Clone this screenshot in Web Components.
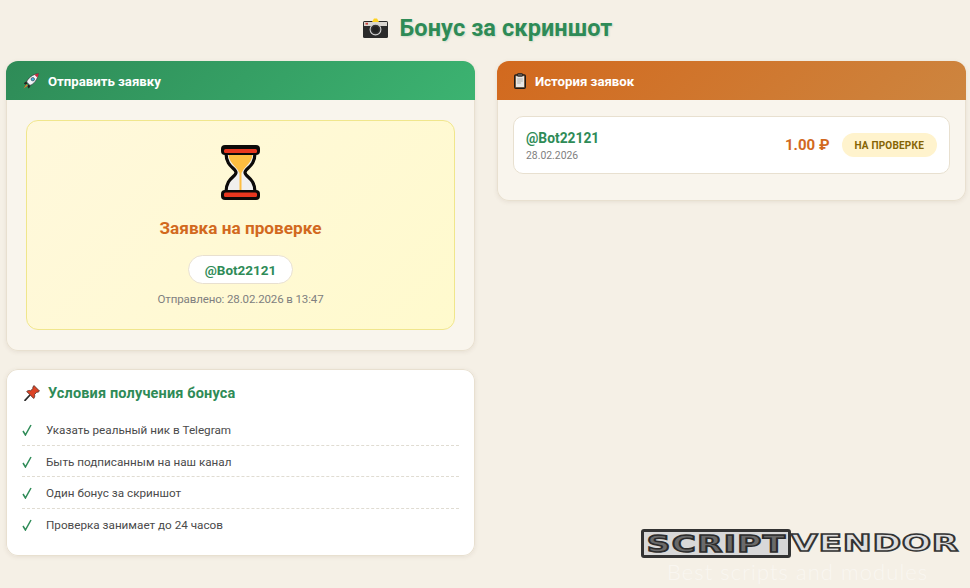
<!DOCTYPE html>
<html lang="ru">
<head>
<meta charset="utf-8">
<title>Бонус за скриншот</title>
<style>
  html, body { margin: 0; height: 100%; }
  body {
    background: #f5f0e6;
    font-family: Roboto, "Open Sans", sans-serif;
    overflow: hidden;
  }
</style>
</head>
<body>
<bonus-page>
  <bonus-title>Бонус за скриншот</bonus-title>
  <bonus-card slot="left" tone="green" heading="Отправить заявку" icon="rocket">
    <pending-box nick="@Bot22121" sent="Отправлено: 28.02.2026 в 13:47">Заявка на проверке</pending-box>
  </bonus-card>
  <terms-card slot="left" heading="Условия получения бонуса">
    <terms-item>Указать реальный ник в Telegram</terms-item>
    <terms-item>Быть подписанным на наш канал</terms-item>
    <terms-item>Один бонус за скриншот</terms-item>
    <terms-item>Проверка занимает до 24 часов</terms-item>
  </terms-card>
  <bonus-card slot="right" tone="orange" heading="История заявок" icon="clipboard">
    <history-item nick="@Bot22121" date="28.02.2026" amount="1.00 ₽" status="На проверке"></history-item>
  </bonus-card>
</bonus-page>
<vendor-mark></vendor-mark>

<script>
(function () {
  const icons = {
    camera: `<svg viewBox="0 0 25 20" width="25" height="20">
      <rect x="0" y="3" width="25" height="17" rx="1.500" fill="#2b2b2b"/>
      <rect x="1" y="4" width="23" height="4" fill="#d9d6d0"/>
      <path d="M9 4l2-3.500h3L16 4z" fill="#ffd21f"/>
      <rect x="2.500" y="4.800" width="2.500" height="1.800" fill="#c9433a"/>
      <circle cx="12.500" cy="11.500" r="5.400" fill="#343434" stroke="#d2d2d2" stroke-width="1.100"/>
      <circle cx="12.500" cy="11.500" r="3.200" fill="#222"/>
    </svg>`,
    rocket: `<svg viewBox="0 0 16 16" width="16" height="16">
      <path d="M3.400 8.200L.8 10.200l1.400 1.200 2.400-.6z" fill="#222"/>
      <path d="M7.800 12.600l-2 2.800-1.200-1.400.6-2.400z" fill="#222"/>
      <path d="M3.300 11.200L.6 15.400l4.200-2.700z" fill="#e8762c"/>
      <path d="M3.600 9C5 5 9.400 1.400 15.600.4 14.600 6.600 11 11 7 12.400z" fill="#f1f5f8" stroke="#30353a" stroke-width=".7"/>
      <path d="M11.400 1.800c1.300-.6 2.800-1.100 4.200-1.400-.3 1.500-.8 3-1.400 4.200z" fill="#c8283a"/>
      <circle cx="9.800" cy="6.200" r="1.700" fill="#45b4e0" stroke="#30353a" stroke-width=".6"/>
    </svg>`,
    clipboard: `<svg viewBox="0 0 12 16" width="12" height="16">
      <rect x=".6" y="1.800" width="10.800" height="13.500" rx="1.300" fill="#8a6a4c" stroke="#1e1a17" stroke-width="1.200"/>
      <rect x="2" y="3.200" width="8" height="10.800" fill="#e9e8e4"/>
      <path d="M3.200 6h5.600M3.200 8h5.600M3.200 10h3.600" stroke="#a9a9a5" stroke-width=".9"/>
      <rect x="3.500" y=".5" width="5" height="2.800" rx=".6" fill="#5d5853" stroke="#1e1a17" stroke-width=".7"/>
    </svg>`,
    pin: `<svg viewBox="0 0 16 16" width="16" height="16">
      <path d="M5.500 10.500L1 15.300" stroke="#2a2a2a" stroke-width="1.700" stroke-linecap="round"/>
      <path d="M10 .5l5.500 5.500-1.500 1.300-1.200-.2-2.300 2.500c.5 1.500.2 2.900-.8 3.900L2.700 6.500c1-1 2.400-1.300 3.900-.8l2.400-2.300-.2-1.200z" fill="#dc4426" stroke="#3a1a12" stroke-width=".7" stroke-linejoin="round"/>
    </svg>`,
    hourglass: `<svg viewBox="0 0 39 55" width="39" height="55">
      <path d="M5 8c0 14 10 15 10 19.500S5 33 5 47h29c0-14-10-15-10-19.500S34 22 34 8z" fill="#f0efee" stroke="#0c0a09" stroke-width="3.200" stroke-linejoin="round"/>
      <path d="M7.500 10h24c-1 9-9 12-10.500 17.500h-3C16.500 22 8.500 19 7.500 10z" fill="#fdbd40"/>
      <rect x="18.500" y="26" width="2" height="20" fill="#fdbd40"/>
      <rect x="0" y="0" width="39" height="10" rx="4" fill="#0c0a09"/>
      <rect x="3" y="4" width="33" height="4" rx="1.500" fill="#e8371f"/>
      <rect x="0" y="45" width="39" height="10" rx="4" fill="#0c0a09"/>
      <rect x="3" y="47.500" width="33" height="4.500" rx="1.500" fill="#e8371f"/>
    </svg>`
  };

  function define(name, css, html) {
    class El extends HTMLElement {
      constructor() {
        super();
        this.attachShadow({ mode: 'open' });
      }
      connectedCallback() {
        this.shadowRoot.innerHTML = `<style>${css}</style>${html(this)}`;
      }
    }
    customElements.define(name, El);
  }

  define('bonus-page', `
    :host { display: block; padding: 0 4px 0 6px; }
    .cols { display: grid; grid-template-columns: 469px 469px; gap: 22px; margin-top: 8px; align-items: start; }
    .col { display: flex; flex-direction: column; gap: 18px; }
  `, () => `
    <slot></slot>
    <div class="cols">
      <div class="col"><slot name="left"></slot></div>
      <div class="col"><slot name="right"></slot></div>
    </div>
  `);

  define('bonus-title', `
    :host { display: flex; justify-content: center; align-items: center; gap: 12px; box-sizing: border-box; height: 53px; padding: 2px 0 0 3px; color: #2e8b57;
      font-size: 23.500px; font-weight: 700; letter-spacing: .1px; line-height: 30px; text-shadow: 1px 1px 2px rgba(46,139,87,.2); }
    svg { display: block; }
  `, () => `${icons.camera}<slot></slot>`);

  define('bonus-card', `
    :host { display: block; background: #f9f5ed; border-radius: 12px; overflow: hidden;
      box-shadow: inset 0 0 0 1px #e8e0d0, 0 1px 4px rgba(120,100,70,.12); }
    .head { display: flex; align-items: center; gap: 9px; box-sizing: border-box; height: 39px; padding: 1px 17px 0; color: #fff;
      font-size: 13.200px; font-weight: 700; }
    :host([tone="green"]) .head { background: linear-gradient(135deg, #2e8b57, #3cb371); }
    :host([tone="orange"]) .head { background: linear-gradient(135deg, #d2691e, #cd853f); }
    :host([tone="green"]) .body { padding: 20px 20px 21px; }
    :host([tone="orange"]) .body { padding: 16px 16px 27px; }
    svg { display: block; }
  `, el => `
    <div class="head">${icons[el.getAttribute('icon')]}<span>${el.getAttribute('heading')}</span></div>
    <div class="body"><slot></slot></div>
  `);

  define('pending-box', `
    :host { display: flex; flex-direction: column; align-items: center; height: 210px; box-sizing: border-box; padding: 24px 0 0;
      background: linear-gradient(135deg, #fff8dc, #fffacd); border: 1px solid #f0e68c; border-radius: 12px; }
    .title { margin-top: 17px; color: #d2691e; font-size: 17.200px; font-weight: 700; line-height: 22px; }
    .nick { margin-top: 16px; height: 29px; box-sizing: border-box; padding: 0 16px; display: flex; align-items: center; background: #fff;
      border: 1px solid #e8e0d0; border-radius: 15px; color: #2e8b57; font-size: 13.500px; font-weight: 700; }
    .sent { margin-top: 7px; color: #808080; font-size: 11.500px; letter-spacing: -.12px; line-height: 16px; }
    svg { display: block; }
  `, el => `
    ${icons.hourglass}
    <div class="title"><slot></slot></div>
    <div class="nick">${el.getAttribute('nick')}</div>
    <div class="sent">${el.getAttribute('sent')}</div>
  `);

  define('history-item', `
    :host { display: flex; align-items: center; justify-content: space-between; height: 58px; box-sizing: border-box; padding: 0 12px;
      background: #fff; border: 1px solid #e8e0d0; border-radius: 10px; }
    .who { padding-top: 2px; }
    .nick { color: #2e8b57; font-size: 13.800px; font-weight: 700; line-height: 19px; }
    .date { color: #808080; font-size: 10.400px; line-height: 15px; }
    .right { display: flex; align-items: center; gap: 12px; }
    .amount { color: #d2691e; font-size: 15px; font-weight: 700; }
    .status { height: 24px; padding: 0 13px; display: flex; align-items: center; background: #fff3cd; border-radius: 12px;
      color: #856404; font-size: 10px; font-weight: 700; text-transform: uppercase; letter-spacing: .2px; }
  `, el => `
    <div class="who">
      <div class="nick">${el.getAttribute('nick')}</div>
      <div class="date">${el.getAttribute('date')}</div>
    </div>
    <div class="right">
      <span class="amount">${el.getAttribute('amount')}</span>
      <span class="status">${el.getAttribute('status')}</span>
    </div>
  `);

  define('terms-card', `
    :host { display: block; box-sizing: border-box; height: 187px; padding: 13px 16px 0 16px; background: #fff; border-radius: 12px;
      box-shadow: inset 0 0 0 1px #e8e0d0, 0 1px 4px rgba(120,100,70,.12); }
    .head { display: flex; align-items: center; gap: 8px; height: 22px; margin: 0 0 10px 2px; color: #2e8b57; font-size: 14.500px; font-weight: 700; letter-spacing: .15px; }
    svg { display: block; }
  `, el => `
    <div class="head">${icons.pin}<span>${el.getAttribute('heading')}</span></div>
    <slot></slot>
  `);

  define('terms-item', `
    :host { display: flex; align-items: center; gap: 14px; height: 31.500px; box-sizing: border-box; padding-top: 2px; color: #4a4a4a; font-size: 11.700px;
      border-bottom: 1px dashed #e0dcd2; }
    :host(:last-child) { border-bottom: none; }
    svg { display: block; flex: none; }
  `, () => `
    <svg viewBox="0 0 10 12" width="10" height="12"><path d="M1 7l2.400 4L9 1" fill="none" stroke="#2e8b57" stroke-width="1.500"/></svg>
    <slot></slot>
  `);

  define('vendor-mark', `
    :host { position: absolute; left: 641px; top: 529px; width: 320px; height: 59px; pointer-events: none; }
    .logo { display: flex; height: 29px; font-family: "DejaVu Sans", sans-serif; font-size: 23px; font-weight: 700; line-height: 24px; }
    .a { box-sizing: border-box; width: 150px; height: 29px; background: #d8d8d8; border: 3px solid #333; border-radius: 3px; overflow: hidden; }
    .a span { display: block; transform: scaleX(1.42); transform-origin: left center; padding-left: 2px; color: #6a6a6a; -webkit-text-stroke: 1.500px #2b2b2b; letter-spacing: 1px; white-space: nowrap; }
    .b { display: block; height: 29px; transform: scaleX(1.5); transform-origin: left center; color: #dedede; -webkit-text-stroke: 1.500px #333; letter-spacing: .5px; line-height: 29px; white-space: nowrap; }
    .tag { margin: 1px 0 0 26px; color: rgba(255,255,255,.45); font-family: Lato, "Open Sans", sans-serif; font-weight: 300; font-size: 22px; letter-spacing: 1.050px; line-height: 26px; white-space: nowrap; }
  `, () => `
    <div class="logo"><div class="a"><span>SCRIPT</span></div><div class="b">VENDOR</div></div>
    <div class="tag">Best scripts and modules</div>
  `);
})();
</script>
</body>
</html>
